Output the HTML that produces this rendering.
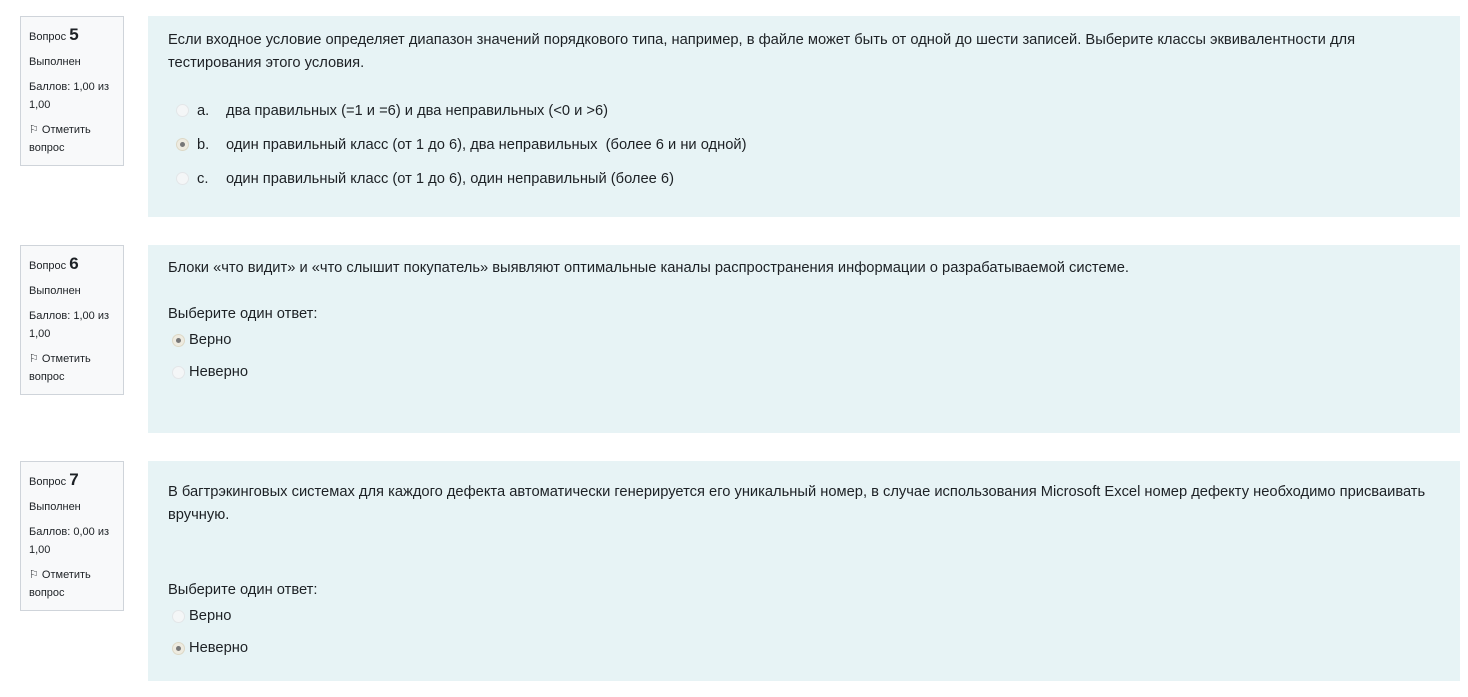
<!DOCTYPE html>
<html><head><meta charset="utf-8"><style>
body{margin:0;background:#fff;font-family:"Liberation Sans",sans-serif;color:#1d2125;width:1468px;height:697px;overflow:hidden;position:relative}
.info{position:absolute;left:20px;width:104px;background:#f8f9fa;border:1px solid #cfd4da;box-sizing:border-box;padding:9px 0 0 8px;font-size:11px;line-height:18px;color:#1d2125}
.info .q{font-size:11px}.info .q b{font-size:17px;font-weight:bold}
.info div{margin-bottom:7px}
.c{position:absolute;left:148px;width:1312px;background:#e7f3f5}
.t{position:absolute;font-size:14.7px;line-height:23px;white-space:nowrap}
.r{position:absolute;width:11px;height:11px;border-radius:50%;background:#f4f6f7;border:1px solid #e3e6e8}
.r.on::after{content:"";position:absolute;left:3px;top:3px;width:5px;height:5px;border-radius:50%;background:#777}
.r.on{background:#eeebe0;border-color:#ddd8c6}
</style></head><body>
<div class="info" style="top:16px;height:150px"><div class="q">Вопрос <b>5</b></div><div>Выполнен</div><div>Баллов: 1,00 из 1,00</div><div>⚐ Отметить вопрос</div></div>
<div class="c" style="top:16px;height:201px"></div>
<div class="t" style="left:168px;top:29px">Если входное условие определяет диапазон значений порядкового типа, например, в файле может быть от одной до шести записей. Выберите классы эквивалентности для</div>
<div class="t" style="left:168px;top:52px">тестирования этого условия.</div>
<div class="r" style="left:176px;top:104px"></div><div class="t" style="left:197px;top:100px">a.</div><div class="t" style="left:226px;top:100px">два правильных (=1 и =6) и два неправильных (&lt;0 и &gt;6)</div>
<div class="r on" style="left:176px;top:138px"></div><div class="t" style="left:197px;top:134px">b.</div><div class="t" style="left:226px;top:134px">один правильный класс (от 1 до 6), два неправильных&nbsp; (более 6 и ни одной)</div>
<div class="r" style="left:176px;top:172px"></div><div class="t" style="left:197px;top:168px">c.</div><div class="t" style="left:226px;top:168px">один правильный класс (от 1 до 6), один неправильный (более 6)</div>

<div class="info" style="top:245px;height:150px"><div class="q">Вопрос <b>6</b></div><div>Выполнен</div><div>Баллов: 1,00 из 1,00</div><div>⚐ Отметить вопрос</div></div>
<div class="c" style="top:245px;height:188px"></div>
<div class="t" style="left:168px;top:257px">Блоки «что видит» и «что слышит покупатель» выявляют оптимальные каналы распространения информации о разрабатываемой системе.</div>
<div class="t" style="left:168px;top:303px">Выберите один ответ:</div>
<div class="r on" style="left:172px;top:334px"></div><div class="t" style="left:189px;top:329px">Верно</div>
<div class="r" style="left:172px;top:366px"></div><div class="t" style="left:189px;top:361px">Неверно</div>

<div class="info" style="top:461px;height:150px"><div class="q">Вопрос <b>7</b></div><div>Выполнен</div><div>Баллов: 0,00 из 1,00</div><div>⚐ Отметить вопрос</div></div>
<div class="c" style="top:461px;height:220px"></div>
<div class="t" style="left:168px;top:481px">В багтрэкинговых системах для каждого дефекта автоматически генерируется его уникальный номер, в случае использования Microsoft Excel номер дефекту необходимо присваивать</div>
<div class="t" style="left:168px;top:504px">вручную.</div>
<div class="t" style="left:168px;top:579px">Выберите один ответ:</div>
<div class="r" style="left:172px;top:610px"></div><div class="t" style="left:189px;top:605px">Верно</div>
<div class="r on" style="left:172px;top:642px"></div><div class="t" style="left:189px;top:637px">Неверно</div>
</body></html>
